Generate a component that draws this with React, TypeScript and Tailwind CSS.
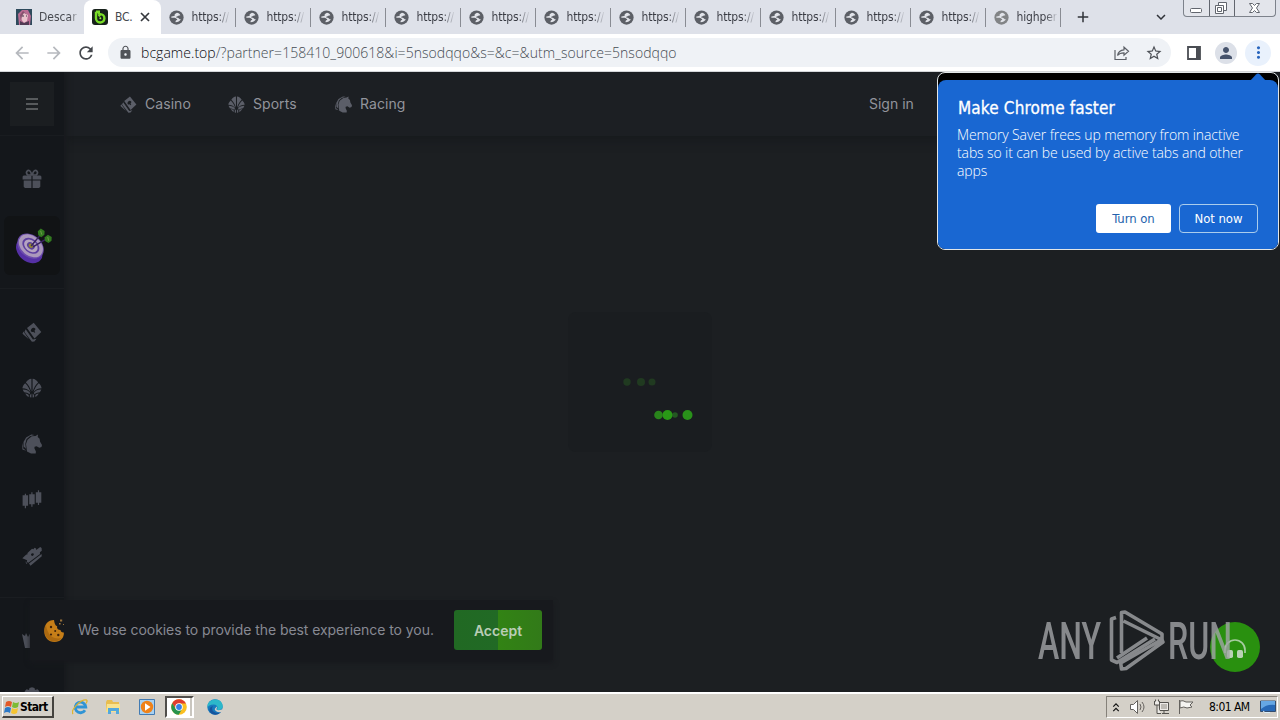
import React from 'react';
import { MdAdd, MdArrowBack, MdArrowForward, MdKeyboardArrowDown, MdLock, MdMoreVert, MdPerson, MdRefresh, MdStarBorder } from 'react-icons/md';

interface IconProps {
  className?: string;
}

interface TabInfo {
  title: string;
  muted?: boolean;
}

const tabs: TabInfo[] = [
  ...Array.from({ length: 11 }, () => ({ title: 'https://' })),
  { title: 'highper', muted: true },
];

const GlobeIcon: React.FC<IconProps> = ({ className }) => (
  <svg viewBox="0 0 16 16" className={className}>
    <circle cx="8" cy="8" r="7.6" fill="currentColor" />
    <path d="M8.500 2.800 6 4.500l.3 1.300-2 .8-1.800.2v1.500c2 .1 3.500-.3 4.800.5.900.6 1.700.9 1.400 1.800-.6.8-1.600.5-1.700 1.300v1.200c2.500 0 4.500-1.400 5.700-3.200-1.700.3-1.900-.8-2.700-1.400-.9-.6-2.400.1-2.400-1 0-.9 1.500-.7 2-1.200.6-.6 1.300-.4 2.500-.8C11.500 3.900 10 3 8.500 2.800Z" fill="#e2e4ea" />
  </svg>
);

const CardsIcon: React.FC<IconProps> = ({ className }) => (
  <svg viewBox="0 0 20 20" className={className} fill="currentColor">
    <path fillRule="evenodd" d="M11.700.7 19.300 10 12.500 16.600 5 6ZM11.200 5.700C9.400 6.300 8.600 7.800 8.900 9.300c.6.800 1.600.9 2.300.5l1.200 1 .8-.6-.8-1.500c.8-.6 1.200-1.400.8-2.200-.6-.8-1.500-.9-2-.8Z" />
    <path d="M3.700 7.300 10.900 17.600 14.500 16.800 12.400 19.400 9.900 19.800 2.400 9.900Z" />
    <path d="M1.500 9.600.5 11.700 6.800 17.300Z" />
  </svg>
);

const BallIcon: React.FC<IconProps> = ({ className }) => (
  <svg viewBox="0 0 20 20" className={className} fill="currentColor">
    <path d="M9.400.7v12.800C7.900 9.200 6.400 6.700 3.900 4.400 5.200 2.300 7 .900 9.400.7ZM10.600.7v12.800c1.500-4.300 3-6.800 5.500-9.100C14.800 2.300 13 .900 10.600.7Z" />
    <path d="M3.200 5.200C6 7.800 7.500 10.600 8.500 14.300 6.500 11.500 4 10.400.4 10.300.5 8.300 1.700 6.500 3.200 5.200ZM16.800 5.200c-2.800 2.600-4.300 5.400-5.300 9.100 2-2.800 4.500-3.900 8.100-4-.1-2-1.300-3.800-2.800-5.100Z" />
    <path d="M.7 11.500c3.500 0 5.800 1 7.600 3.500l-.9 1.200c-1.700-1.200-3.300-1.800-5.100-1.900-.8-.7-1.300-1.700-1.600-2.800ZM19.300 11.500c-3.500 0-5.800 1-7.600 3.500l.9 1.200c1.700-1.200 3.300-1.800 5.100-1.900.8-.7 1.300-1.700 1.600-2.800ZM3.300 15.400c1.500.2 2.500.7 3.400 1.500v2c-1.300-.6-2.500-1.800-3.400-3.500ZM16.700 15.400c-1.500.2-2.500.7-3.400 1.500v2c1.300-.6 2.500-1.800 3.400-3.500ZM7.900 17l1.500-1.400v4l-1.500-.3ZM12.100 17l-1.500-1.400v4l1.500-.3Z" />
  </svg>
);

const HorseIcon: React.FC<IconProps> = ({ className }) => (
  <svg viewBox="0 0 20 20" className={className} fill="currentColor">
    <path d="m16 .5-.3 2.500 1.900 1.700.5 3 1.900 3.200-.5 2-2.200.9-2.700-1.600-2 .5-.2 1.500 1.500 3.200-.2 2.100H9L5 17.400 4 10l1.500-4.300 4.300-3.400 3.700-.4Z" />
    <path d="M9.300.5 12.500.9 7.900 2.300 4.500 5.300 3.300 9.800l.6 5-2.200-2.200-.2-4.500 2.600-4.700ZM1 8.700l.3 5.700 3 2.400L.4 15.500l-.1-3.300Z" />
  </svg>
);

const CandlesIcon: React.FC<IconProps> = ({ className }) => (
  <svg viewBox="0 0 20 20" className={className} fill="currentColor">
    <path d="M2.800 3.800h1.200v1.400h2.100v10.500H4v2.600H2.800v-2.600H.6V5.200h2.200ZM9.300 2.300h1.200v1.900h2.200v10h-2.200v2.600H9.300v-2.600H7.200v-10h2.100ZM15.900.3h1.200v2h2.200v10.400h-2.200v2.200h-1.200v-2.200h-2.100V2.300h2.100Z" />
  </svg>
);

const TicketIcon: React.FC<IconProps> = ({ className }) => (
  <svg viewBox="0 0 20 20" className={className} fill="currentColor">
    <path fillRule="evenodd" d="M.3 12.200 4.300 8.500l1-.1.200-1.500L10 2.700l1.400.5 1.100-1.400 1.600.7.1 1.500L18.200.900l1.400 1 .2 2.900-1.900 1.400.1 1.700L6.400 16.700l-1.600-.8.3-1.700ZM10 7.300 9 8.300l.3 1.300 1.300.3 1.200-1.100-.2-1.300Z" />
    <path d="m7 17.600 12.500-9.500.3 2.100L8.500 19.700ZM3.400 15.200l2 2.300-1.200.3Z" />
  </svg>
);

const GiftIcon: React.FC<IconProps> = ({ className }) => (
  <svg viewBox="0 0 20 20" className={className} fill="currentColor">
    <path d="M1.700 6.500h7.700v4H.6V7.600ZM10.600 6.500h7.700l1.100 1.100v2.900h-8.800ZM1.700 11.600h7.700V19H3l-1.300-1.200ZM10.600 11.600h7.700v6.200L17 19h-6.400Z" />
    <path d="M9.400 6H5.800C4.400 4.800 4.200 3.400 5 2.300c1.500-1.800 4.400-.5 4.400 3.700ZM10.600 6h3.600c1.400-1.200 1.600-2.600.8-3.700-1.500-1.800-4.400-.5-4.400 3.700Z" fill="none" stroke="currentColor" strokeWidth="1.700" />
  </svg>
);

const TargetIcon: React.FC<IconProps> = ({ className }) => (
  <svg viewBox="0 0 40 38" className={className}>
    <g transform="rotate(40 15 20)">
      <ellipse cx="17.500" cy="23" rx="15.500" ry="11.500" fill="#5530a5" />
      <ellipse cx="15.500" cy="18.500" rx="15.500" ry="11.500" fill="#6c4cad" />
      <ellipse cx="15.500" cy="18" rx="14.200" ry="10.400" fill="#ab98bc" />
      <ellipse cx="15.500" cy="18" rx="10" ry="7.200" fill="#5d3f9f" />
      <ellipse cx="15.500" cy="18" rx="8" ry="5.700" fill="#b5a3c1" />
      <ellipse cx="15.500" cy="18" rx="4.500" ry="3.300" fill="#5b4297" />
      <ellipse cx="15.500" cy="18" rx="2.500" ry="2" fill="#94872f" />
    </g>
    <path d="m17 19 10-12M19 20l15-9" stroke="#39245e" strokeWidth="1.600" />
    <path d="m24 3.500 3.200-3 4 2.700-.2 3.800-3.300 2.700-3.200-2ZM31 10l3.700-3 4 2.500-.2 4-3.200 2.400-3.500-2.300Z" fill="#327a20" />
    <path d="m27 3 1.200 4M34.500 9.500l1 4" stroke="#71994d" />
  </svg>
);

const CookieIcon: React.FC<IconProps> = ({ className }) => (
  <svg viewBox="0 0 24 24" className={className}>
    <path d="M11 2C5 2 1.200 6.500 1.200 13S5.500 24 11.500 24c5.800 0 9.700-4 9.400-9.500-2.200.2-3.200-.8-3.400-2.500-2.500 0-4-1.600-3.300-3.700C12 7.500 11.500 5 11 2Z" fill="#c67e18" />
    <path d="M3 7C.500 11 1 18 5.500 21.500c4.500 3.300 10 1.900 13-1.500-6 1.500-11.500-1.300-13-5.300C4 12 3.200 9 3 7Z" fill="#9b5c0c" opacity=".6" />
    <circle cx="8" cy="9" r="1.200" fill="#40230b" />
    <circle cx="8" cy="16.500" r="1.100" fill="#40230b" />
    <circle cx="12.200" cy="13" r="1" fill="#40230b" />
    <circle cx="15.300" cy="17" r="1.200" fill="#40230b" />
    <path d="M17 1.500h2.200v2H17ZM16 5h1.600v1.500H16ZM20 6h1v1h-1Z" fill="#98713a" />
  </svg>
);

const ShareIcon: React.FC<IconProps> = ({ className }) => (
  <svg viewBox="0 0 18 18" className={className} fill="none" stroke="currentColor" strokeWidth="1.200">
    <path d="M2 6v9.500h11V13M4.500 11.500c.8-4 3.200-5.500 6.500-5.700V3.200l4.500 4-4.500 4V8.800c-3 0-5 .7-6.500 2.700Z" />
  </svg>
);

const BrowserTabs = () => (
  <div className="flex h-[34px] shrink-0 bg-[#dee1e9] text-[12px] text-[#45474d]">
    <div className="flex w-[84px] items-center pl-4">
      <svg viewBox="0 0 16 16" className="size-4 shrink-0">
        <path d="M0 0h16v16H0Z" fill="#2e4a5c" />
        <path d="M3 16 2 5l4-4 6 0 3 6-1 9Z" fill="#b96c93" />
        <path d="M5 5 8 3l4 3-1 6-3 2-3-4Z" fill="#e9c3cd" />
        <path d="m4 6 3-4 5 4-4-2-2 3-1 5Z" fill="#87516f" />
        <path d="M6 7h2M10 7h1" stroke="#3c3144" />
        <path d="m4 12 4 2 5-2v4H4Z" fill="#513b54" />
      </svg>
      <span className="ml-[7px] whitespace-nowrap bg-linear-to-r from-[#45474d] from-80% to-[#45474d]/30 bg-clip-text text-transparent">Descar</span>
    </div>
    <div className="flex w-[77px] items-center rounded-t-lg bg-white pl-2">
      <svg viewBox="0 0 16 16" className="size-4 shrink-0">
        <rect width="16" height="16" rx="3" fill="#17211b" />
        <path d="M4 2.800h2.800v2.600M4 2.800v6.400a4.200 4.200 0 1 0 4.300-4.100L6.800 7.400" fill="none" stroke="#79dc28" strokeWidth="2.400" />
        <circle cx="8.300" cy="9.300" r="1" fill="#a0f044" />
      </svg>
      <span className="ml-[7px] w-[17px] whitespace-nowrap tracking-[-0.3px]">BC.</span>
      <svg viewBox="0 0 10 10" className="ml-[8px] size-[10px] shrink-0" stroke="#35383d" strokeWidth="1.700">
        <path d="m1 1 8 8M9 1 1 9" />
      </svg>
    </div>
    {tabs.map((tab, i) => (
      <div key={i} className="relative flex w-[75px] items-center pl-[7.500px]">
        <GlobeIcon className={tab.muted ? 'size-[15px] shrink-0 text-[#828486]' : 'size-[15px] shrink-0 text-[#5c5f66]'} />
        <span className="ml-2 whitespace-nowrap bg-linear-to-r from-[#393b43] from-70% to-[#393b43]/10 bg-clip-text tracking-[-0.15px] text-transparent">{tab.title}</span>
        <span className="absolute right-0 h-[19px] w-px bg-[#898c93]" />
      </div>
    ))}
    <div className="flex w-[43px] items-center justify-center">
      <MdAdd className="size-[18px] text-[#303339]" />
    </div>
    <div className="ml-[48px] flex items-center">
      <MdKeyboardArrowDown className="size-[18px] text-[#303339]" />
    </div>
    <div className="ml-[13px] flex h-[17px] w-[93px] rounded-b-[4px] border border-t-0 border-[#7d828b] bg-[#e3e5eb]">
      <svg viewBox="0 0 91 16" className="h-4 w-[91px]" fill="#fff" stroke="#62666e">
        <path d="M25.500 0v16M50.500 0v16" />
        <rect x="6.500" y="8.500" width="11" height="4" rx="1" />
        <path d="M34.500 2.500h8v8h-8Z" />
        <path d="M31.500 5.500h8v8h-8ZM33.500 7.500h4v4h-4Z" />
        <path d="M65.500 3.500h3l2 2 2-2h3l-3 4.500 3 4.500h-3l-2-2-2 2h-3l3-4.500Z" />
      </svg>
    </div>
  </div>
);

const AddressBar = () => (
  <div className="flex h-[38px] shrink-0 items-center border-b border-[#d4d6d9] bg-white">
    <MdArrowBack className="ml-3 size-5 text-[#b6b9be]" />
    <MdArrowForward className="ml-3 size-5 text-[#b6b9be]" />
    <MdRefresh className="ml-3 size-5 text-[#44474c]" />
    <div className="ml-[12px] flex h-[29px] w-[1063px] items-center rounded-full bg-[#eff2f6] pl-[10px]">
      <MdLock className="size-[15px] text-[#515459]" />
      <span className="ml-2 font-['Open_Sans',sans-serif] text-[14px] leading-[20px] font-light tracking-[0.045px] whitespace-nowrap text-[#454b52]">
        <span className="text-[#08090c]">bcgame.top</span>/?partner=158410_900618&i=5nsodqqo&s=&c=&utm_source=5nsodqqo
      </span>
      <ShareIcon className="ml-auto size-[18px] text-[#5c6067]" />
      <MdStarBorder className="mr-[8px] ml-[14px] size-[18px] text-[#4d5157]" />
    </div>
    <svg viewBox="0 0 16 14" className="ml-[15px] h-[14px] w-4 text-[#4a4d53]">
      <path d="M2 1h12v12H2Z" fill="none" stroke="currentColor" strokeWidth="1.800" />
      <path d="M10 1h4v12h-4Z" fill="currentColor" />
    </svg>
    <div className="ml-[13px] flex size-[22px] items-center justify-center rounded-full bg-[#dce0e8]">
      <MdPerson className="size-[18px] text-[#46536c]" />
    </div>
    <div className="ml-[8px] flex size-[26px] items-center justify-center rounded-full bg-[#e9f1fc]">
      <MdMoreVert className="size-[19px] text-[#2865bd]" />
    </div>
  </div>
);

const Sidebar = () => (
  <aside className="relative z-10 flex w-16 shrink-0 flex-col items-center overflow-hidden bg-[#14171b] text-[#4d505a] shadow-[3px_0_5px_#181a1e]">
    <div className="flex h-16 w-full shrink-0 items-center justify-center border-b border-[#191c20]">
      <div className="flex size-11 items-center justify-center bg-[#1b1e21]">
        <svg viewBox="0 0 14 12" className="h-3 w-[14px]" stroke="#575a5c" strokeWidth="2">
          <path d="M1 1h12M1 6h12M1 11h12" />
        </svg>
      </div>
    </div>
    <div className="flex h-20 w-full shrink-0 items-center justify-center pt-[6px]">
      <GiftIcon className="size-5" />
    </div>
    <div className="flex h-[59px] w-[56px] shrink-0 items-center justify-center rounded-md bg-[#111315]">
      <TargetIcon className="ml-[3px] h-[36px] w-[38px]" />
    </div>
    <div className="mt-[13px] h-px w-full shrink-0 bg-[#1a1d21]" />
    <div className="flex shrink-0 flex-col gap-9 pt-[33px]">
      <CardsIcon className="size-5" />
      <BallIcon className="size-5" />
      <HorseIcon className="size-5" />
      <CandlesIcon className="size-5" />
      <TicketIcon className="size-5" />
    </div>
    <div className="mt-[31px] h-px w-full shrink-0 bg-[#1a1d21]" />
    <svg viewBox="0 0 20 20" className="mt-[32px] size-5 shrink-0" fill="currentColor">
      <path d="m0 4 3 2 1-3 2 4 3-5 2 5 4-3 2 2 2-2-2 11-4 3H3Z" />
    </svg>
    <svg viewBox="0 0 20 20" className="mt-[37px] size-5 shrink-0" fill="currentColor">
      <path d="m7.500 1 2.500-.7L12.500 1l.5 2 2.500-.8 2 2-.8 2.300 2.300.7v5l-3 8h-12l-3-8v-5l2.500-.7-.9-2.300 2-2L7 3Z" />
    </svg>
  </aside>
);

const navItems = [
  { label: 'Casino', Icon: CardsIcon, width: 'w-[108px]' },
  { label: 'Sports', Icon: BallIcon, width: 'w-[107px]' },
  { label: 'Racing', Icon: HorseIcon, width: 'w-[80px]' },
];

const MemorySaver = () => (
  <div className="absolute top-0 left-[937px] h-[178px] w-[342px] overflow-hidden rounded-[8px] border border-[#e2e6e8] bg-black pt-[7px] text-white">
    <svg viewBox="0 0 18 9" className="absolute top-0 right-[11px] h-[9px] w-[18px]">
      <path d="m0 9 7-7.500Q9-.5 11 1.500L18 9Z" fill="#1967d2" />
    </svg>
    <div className="flex h-full flex-col rounded-t-[8px] bg-[#1967d2] px-5 pt-[17px] pb-4">
      <h2 className="text-[17px] leading-[22px] font-normal tracking-[0.15px] [-webkit-text-stroke:0.3px]">Make Chrome faster</h2>
      <p className="mt-[7px] -ml-px font-['Open_Sans',sans-serif] text-[14px] leading-[18px] font-light tracking-[-0.11px] whitespace-nowrap">
        Memory Saver frees up memory from inactive<br />
        tabs so it can be used by active tabs and other<br />
        apps
      </p>
      <div className="mt-auto flex justify-end gap-2 text-[13px] tracking-[-0.05px]">
        <button className="h-[29px] w-[75px] rounded-[3px] bg-white text-[#2462ad]">Turn on</button>
        <button className="h-[29px] w-[79px] rounded-[4px] border border-[#abcdec]">Not now</button>
      </div>
    </div>
  </div>
);

const Watermark = () => (
  <svg viewBox="0 0 220 70" className="absolute top-[537px] left-[1036px] h-[70px] w-[220px] opacity-80" fill="#a2a4a7" fontFamily="Roboto, sans-serif" fontSize="52" fontWeight="500">
    <text x="2" y="50" textLength="63" lengthAdjust="spacingAndGlyphs">ANY</text>
    <text x="132" y="50" textLength="64" lengthAdjust="spacingAndGlyphs">RUN</text>
    <g fill="none" stroke="#a2a4a7" strokeWidth="3.600" strokeLinejoin="round">
      <path d="M80 8.500 75.500 10V51L81 53.500 119 30" />
      <path d="M85.500 44V3.500L89 3l37 22v6L87.500 12" />
      <path d="m126 31 1 2L90 59.500l-4.500.5-.8-6L125 31" />
      <path d="m81 49 30-20" />
    </g>
  </svg>
);

const SitePage = () => (
  <main className="relative flex h-[620px] shrink-0 overflow-hidden bg-[#1c1f22] font-[Inter,sans-serif] text-[14px]">
    <Sidebar />
    <div className="flex min-w-0 flex-1 flex-col">
      <header className="flex h-16 shrink-0 items-center bg-[#1c1f23] pl-14 text-[#92949c] shadow-[0_5px_8px_#181b1e]">
        {navItems.map(({ label, Icon, width }) => (
          <div key={label} className={`flex items-center gap-2 ${width}`}>
            <Icon className="size-[17px] text-[#5b5e68]" />
            <span className="pb-[2px] tracking-[0.05px]">{label}</span>
          </div>
        ))}
        <span className="ml-[454px] pb-[2px]">Sign in</span>
      </header>
      <div className="pt-[176px] pl-[504px]">
        <div className="flex h-[140px] w-[144px] rounded-lg bg-[#1a1d20]">
          <svg viewBox="0 0 144 140" className="h-[140px] w-[144px]">
            <g fill="#203a20">
              <circle cx="59" cy="70" r="3.700" />
              <circle cx="73" cy="70" r="4" />
              <circle cx="84" cy="70" r="3.500" />
            </g>
            <circle cx="107" cy="103" r="2.800" fill="#245822" />
            <circle cx="90.500" cy="103" r="4.300" fill="#29841b" />
            <circle cx="99.500" cy="103" r="5" fill="#299816" />
            <circle cx="119.500" cy="103" r="5" fill="#29911a" />
          </svg>
        </div>
      </div>
    </div>

    {/* Cookie consent */}
    <div className="absolute top-[528px] left-[30px] z-20 flex h-[60px] w-[523px] items-center bg-[#17191d] pr-[11px] pl-[13px] shadow-[0_3px_5px_#17191d]">
      <CookieIcon className="size-6" />
      <span className="ml-[11px] pb-px whitespace-nowrap tracking-[-0.06px] text-[#878993]">We use cookies to provide the best experience to you.</span>
      <button className="ml-auto h-10 w-[88px] rounded-[3px] bg-[linear-gradient(90deg,#216923_0%,#216a25_50%,#328314_50%,#327a19_100%)] pt-px font-semibold text-[#b9cdb5]">Accept</button>
    </div>

    {/* Live support */}
    <div className="absolute top-[550px] left-[1210px] flex size-[50px] items-center justify-center rounded-full bg-[#29900f]">
      <svg viewBox="0 0 24 22" className="mt-1 h-[22px] w-6">
        <path d="M2 15v-3a10 10 0 0 1 20 0v3" fill="none" stroke="#a7cca0" strokeWidth="1.700" />
        <rect x="4" y="12" width="6" height="8" rx="1.700" fill="#b9d2b4" />
        <rect x="14" y="12" width="6" height="8" rx="1.700" fill="#b9d2b4" />
      </svg>
    </div>
    <Watermark />
    <div className="font-['DejaVu_Sans_Condensed','Open_Sans',sans-serif]">
      <MemorySaver />
    </div>
  </main>
);

const Taskbar = () => (
  <footer className="flex h-7 shrink-0 items-center border-t-2 border-white bg-[#d4d0c8] text-[12px] text-black">
    <div className="ml-[2px] flex h-[22px] w-[52px] items-center border-r-2 border-b-2 border-t border-l border-t-white border-l-white border-r-[#45433f] border-b-[#45433f] pl-px">
      <svg viewBox="0 0 16 16" className="size-4 shrink-0">
        <path d="M2 3Q5 1 8 3L7 8Q4 6 1 8Z" fill="#e35a28" />
        <path d="M9 3q3 2 6 0l-1 5q-3 2-6 0Z" fill="#7dbb33" />
        <path d="M1 9q3-2 6 0l-1 5q-3-2-6 0Z" fill="#2c79c7" />
        <path d="M8 9q3 2 6 0l-1 5q-3 2-6 0Z" fill="#f5c431" />
      </svg>
      <span className="text-[12px] font-bold tracking-[-0.65px]">Start</span>
    </div>
    <svg viewBox="0 0 16 16" className="ml-[18px] size-4">
      <path d="M13 11.300a5.300 5.300 0 1 1 .8-3.300H4" fill="none" stroke="#3094d5" strokeWidth="2.800" />
      <path d="M1 15C-2 11 9 0 14.500 1c1 .5.500 2-.5 3.500" fill="none" stroke="#deb42f" strokeWidth="1.300" />
    </svg>
    <svg viewBox="0 0 16 16" className="ml-[17px] size-4">
      <path d="M1 3 2 1h5l1 2h6v10H1Z" fill="#e8bd50" />
      <path d="M2 5h13v8H1Z" fill="#f8e28e" />
      <path d="M3 9h11v6h-3v-3H6v3H3Z" fill="#53a8dc" />
    </svg>
    <svg viewBox="0 0 16 16" className="ml-[18px] size-4">
      <path d="M.5.5h15v15H.5Z" fill="#a7d1f2" stroke="#427bb3" />
      <circle cx="8" cy="8" r="6.200" fill="#ef8219" />
      <path d="m6 4.300 5.500 3.700L6 11.700Z" fill="#fff" />
    </svg>
    <div className="ml-[10px] flex h-[22px] w-[29px] items-center border-2 border-t-[#504e4b] border-r-white border-b-white border-l-[#504e4b] bg-white">
      <svg viewBox="0 0 16 16" className="ml-1 size-4">
        <circle cx="8" cy="8" r="7.800" fill="#fbbf20" />
        <path d="M1.200 4.200A7.800 7.800 0 0 1 15 4.500H8L4.800 9.700Z" fill="#df3d30" />
        <path d="M1.200 4.200A7.800 7.800 0 0 0 7.700 15.800l3.500-6-3.200 1.500-3.200-1.600Z" fill="#27934c" />
        <circle cx="8" cy="8" r="3.800" fill="#fff" />
        <circle cx="8" cy="8" r="2.900" fill="#357fe7" />
      </svg>
      <span className="ml-[3px] h-full w-[2px] bg-[#c9c6bf]" />
    </div>
    <svg viewBox="0 0 16 16" className="ml-[13px] size-4">
      <circle cx="8" cy="8" r="7.700" fill="#1779bd" />
      <path d="M.5 7C1-1 15-2 15.700 7c.2 4-4.500 4.500-6 3.500 2-2 .3-5-3-5C3 5.500 1 7 .5 9Z" fill="#2cb8ca" />
      <path d="M6 7c-3 4 2 9 8 6-2 2.500-7 4-10 1-2.500-2-2-6 2-7Z" fill="#15549d" />
      <path d="M9.700 7.500c1 1.500-1 2.300 0 3.200 1.300.9 5 .5 6-1.200v3c-3 1.500-8 .5-8-2.500Z" fill="#d4d0c8" />
    </svg>
    <div className="mr-[2px] ml-auto flex h-[22px] w-[172px] items-center border border-t-[#85817a] border-r-white border-b-white border-l-[#85817a] pl-[5px]">
      <svg viewBox="0 0 8 12" className="h-[11px] w-2" fill="none" stroke="#111" strokeWidth="1.300">
        <path d="m1 5 3-3 3 3M1 10l3-3 3 3" />
      </svg>
      <svg viewBox="0 0 16 16" className="ml-[10px] size-4" fill="none" stroke="#65625e">
        <path d="M.5 5.500h3l4-4v13l-4-4h-3Z" fill="#fff" />
        <path d="M10 5q2 3 0 6M12 3q4 5 0 10" />
      </svg>
      <svg viewBox="0 0 16 16" className="ml-[8px] size-4" fill="#eceae6" stroke="#55534f">
        <path d="M5.500 3.500h9v8h-9ZM8 14.500h7M10 12v2" />
        <path d="M7 5h6v5H7Z" fill="#bdbab4" stroke="none" />
        <path d="M.5 2v4h5V2M1.500.5v2M4.500.5v2M3 6v8.500h4" />
      </svg>
      <svg viewBox="0 0 16 16" className="ml-[8px] size-4" fill="#f5f4f1" stroke="#65625e">
        <path d="M1.500 15V1M2 2q3-1 6 1h7l-3 3 2 2-5 1q-3-2-7 0Z" />
      </svg>
      <span className="ml-[15px] text-[12px] tracking-[-0.55px] whitespace-nowrap">8:01 AM</span>
      <svg viewBox="0 0 16 14" className="mr-[1px] ml-auto h-[14px] w-4">
        <path d="M.5 1h15v10.500H.5Z" fill="#2869b7" stroke="#334c6e" />
        <path d="M1 1h14v4Q7 4 1 9Z" fill="#66a7e4" />
        <path d="m3 11 2 1.500h5" stroke="#d9edfa" fill="none" />
      </svg>
    </div>
  </footer>
);

export default function App() {
  return (
    <div className="flex h-[720px] w-[1280px] flex-col overflow-hidden font-['DejaVu_Sans_Condensed','Open_Sans',sans-serif]">
      <BrowserTabs />
      <AddressBar />
      <SitePage />
      <Taskbar />
    </div>
  );
}
